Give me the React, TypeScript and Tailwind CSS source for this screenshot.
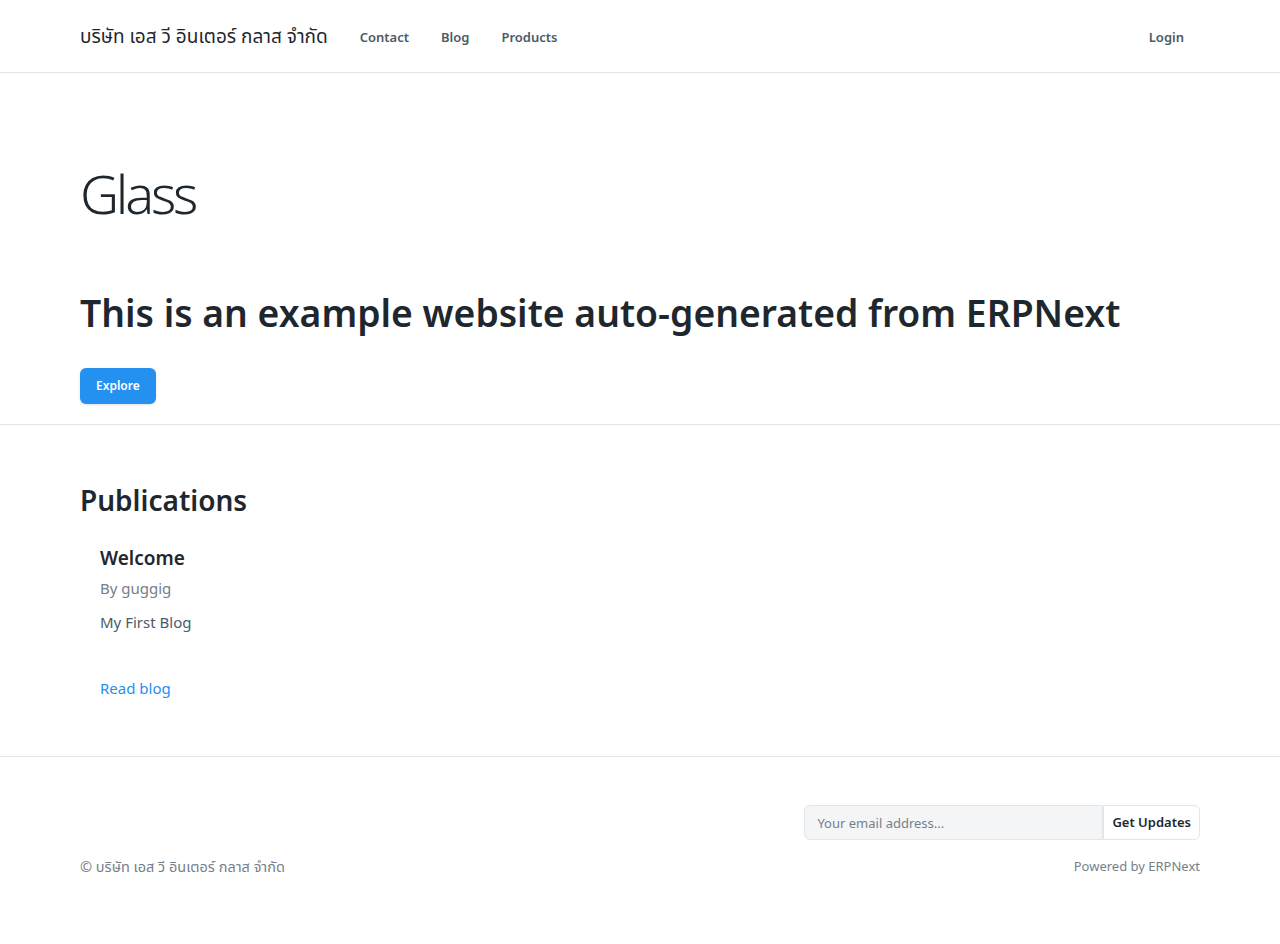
const font = "font-['Segoe_UI','Noto_Sans','Noto_Sans_Thai','Open_Sans',sans-serif]"

const NavLink = ({ label }: { label: string }) => (
  <a href="#" className="px-4 text-[13px] font-semibold text-[#4c5a67]">
    {label}
  </a>
)

export default function App() {
  return (
    <div className={`${font} min-h-[944px] bg-white text-[#1f272e]`}>
      {/* Navbar */}
      <header className="border-b border-[#e2e6e9]">
        <nav className="mx-auto flex h-[72px] max-w-[1120px] items-center">
          <a href="#" className="mr-4 text-[19px] text-[#1f272e]">
            บริษัท เอส วี อินเตอร์ กลาส จำกัด
          </a>
          <div>
            <NavLink label="Contact" />
            <NavLink label="Blog" />
            <NavLink label="Products" />
          </div>
          <div className="ml-auto">
            <NavLink label="Login" />
          </div>
        </nav>
      </header>

      {/* Hero */}
      <section className="border-b border-[#e2e6e9]">
        <div className="mx-auto max-w-[1120px] pt-[88px] pb-5">
          <h1 className="text-[54px] font-light leading-[1.2] tracking-[-0.06em] text-[#1f272e]">Glass</h1>
          <h2 className="mt-[65px] text-[37.3px] font-semibold leading-[1.2] text-[#1f272e]">
            This is an example website auto-generated from ERPNext
          </h2>
          <button
            type="button"
            className="mt-[32px] h-9 rounded-md bg-[#2490ef] px-4 text-[12px] font-semibold text-white shadow-sm"
          >
            Explore
          </button>
        </div>
      </section>

      {/* Publications */}
      <section className="border-b border-[#e2e6e9]">
        <div className="mx-auto max-w-[1120px] pt-[57px] pb-[57px]">
          <h2 className="text-[28px] font-semibold leading-[1.3]">Publications</h2>
          <div className="mt-[28px] px-5">
            <h3 className="text-[19px] font-semibold leading-[1.3] text-[#1f272e]">Welcome</h3>
            <p className="mt-[6px] text-[15px] text-[#74808b]">By guggig</p>
            <p className="mt-[12px] text-[15px] text-[#4c5a67]">My First Blog</p>
            <a href="#" className="mt-[43px] block text-[15px] text-[#2490ef]">
              Read blog
            </a>
          </div>
        </div>
      </section>

      {/* Footer */}
      <footer>
        <div className="mx-auto max-w-[1120px] pt-12">
          <div className="flex justify-end">
            <input
              className="h-[35px] w-[299px] rounded-l-md border border-[#e2e6e9] bg-[#f4f5f6] px-3 text-[13px] placeholder:text-[#74808b]"
              placeholder="Your email address..."
            />
            <button
              type="button"
              className="h-[35px] rounded-r-md border border-[#e2e6e9] bg-white px-2 text-[13px] font-semibold text-[#1f272e]"
            >
              Get Updates
            </button>
          </div>
          <div className="mt-4 flex items-center justify-between text-[13px] text-[#74808b]">
            <span className="text-[14.5px]">© บริษัท เอส วี อินเตอร์ กลาส จำกัด</span>
            <span>Powered by ERPNext</span>
          </div>
        </div>
      </footer>
    </div>
  )
}
